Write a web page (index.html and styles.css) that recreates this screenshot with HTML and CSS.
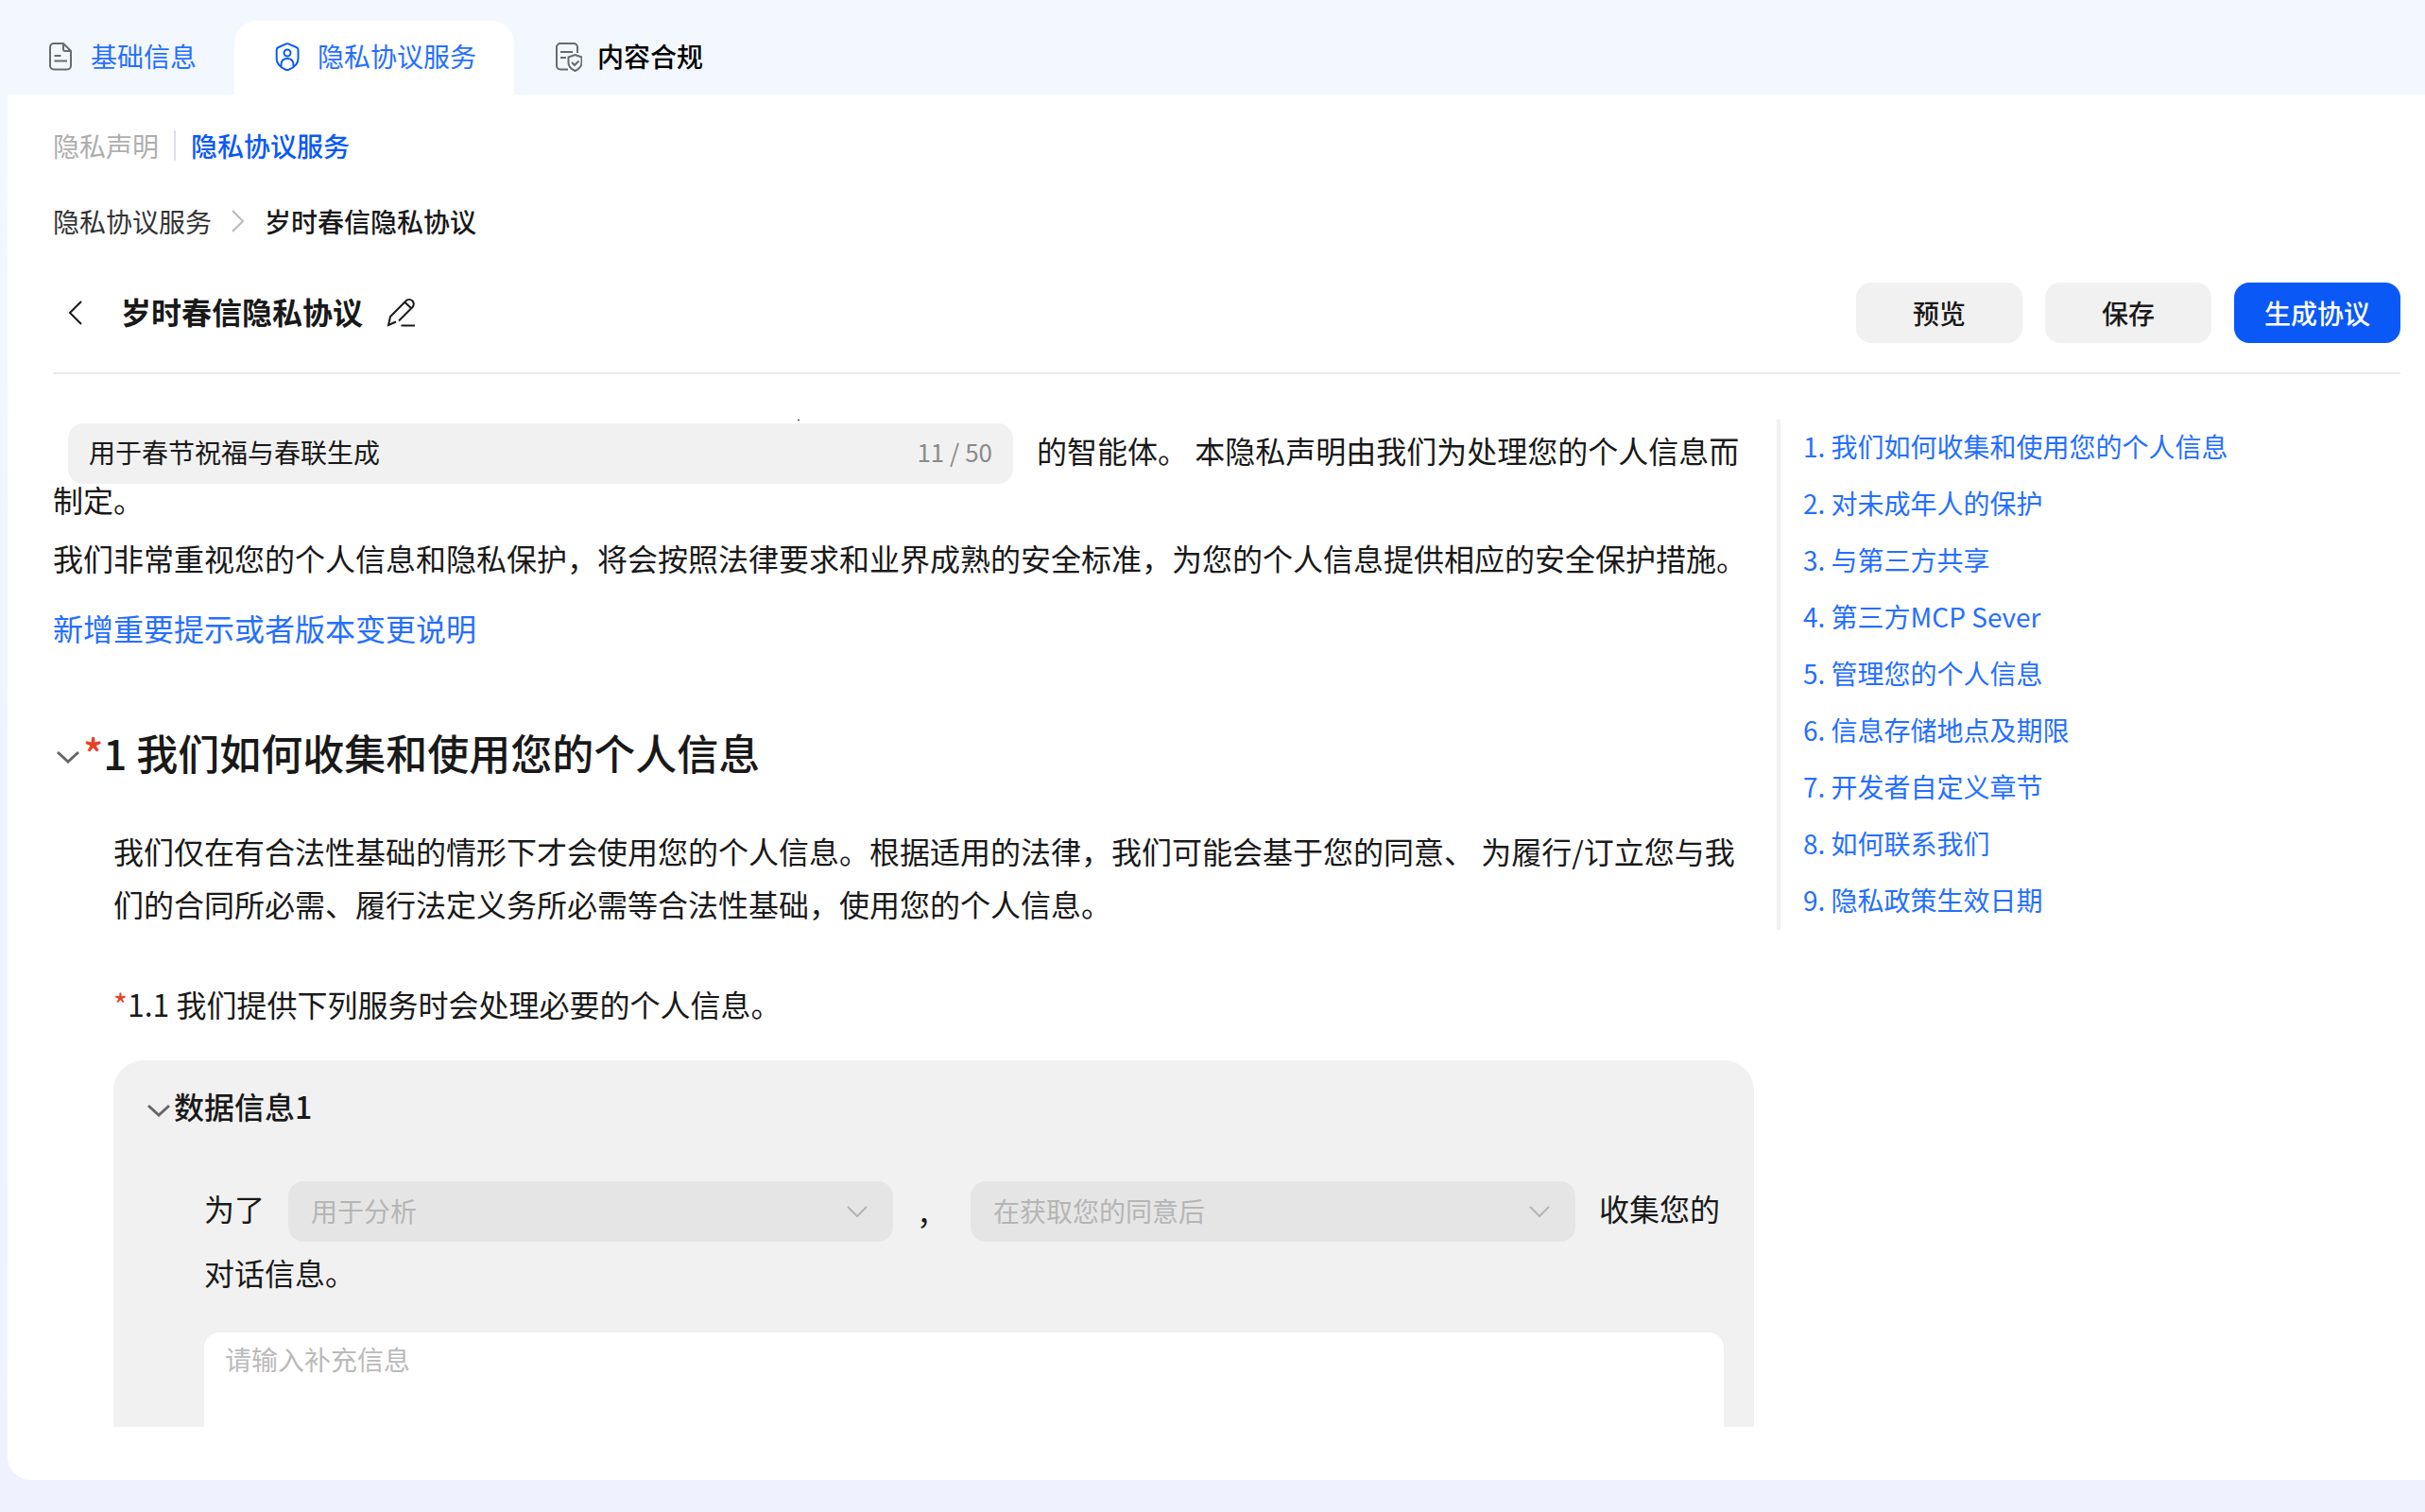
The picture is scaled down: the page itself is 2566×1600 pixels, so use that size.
FILE: index.html
```html
<!DOCTYPE html>
<html lang="zh-CN">
<head>
<meta charset="utf-8">
<meta name="viewport" content="width=device-width, initial-scale=1">
<title>隐私协议服务</title>
<link rel="stylesheet" href="styles.css">
</head>
<body>
<nav class="tabs">
  <a class="tab tab-info" href="#info">
    <svg class="icon" viewBox="0 0 32 32"><path d="M9 1h10l8 8v15.500a4 4 0 0 1-4 4H9a4 4 0 0 1-4-4V5a4 4 0 0 1 4-4zM19 1v6a2 2 0 0 0 2 2h6M9.500 14h7M9.500 19.500h13.500"/></svg>
    <span class="tab-label">基础信息</span>
  </a>
  <a class="tab tab-active" href="#privacy">
    <svg class="icon" viewBox="0 0 32 32"><path d="M15 1.400a3 3 0 0 1 2 0l8.500 3.600a3 3 0 0 1 2 2.700V17c0 6-4.500 9.500-10 11.700a4 4 0 0 1-3 0C9 26.500 4.700 23 4.700 17V7.700a3 3 0 0 1 2-2.700z"/><circle cx="16" cy="11" r="3.500"/><path d="M9.500 25v-1.500c0-4 2.500-6.500 6.500-6.500s6.500 2.500 6.500 6.500V25"/></svg>
    <span class="tab-label">隐私协议服务</span>
  </a>
  <a class="tab tab-check" href="#compliance">
    <svg class="icon" viewBox="0 0 32 32"><path d="M17 28.500H9a4 4 0 0 1-4-4V5a4 4 0 0 1 4-4h14a4 4 0 0 1 4 4v6M9 10h13M9 16h6M24.500 13l7 2.500v6c0 4-3 6.500-7 8.500-4-2-7-4.500-7-8.500v-6zM21 21l3 3 4.500-4.500"/></svg>
    <span class="tab-label">内容合规</span>
  </a>
</nav>
<main class="panel">
  <nav class="subnav">
    <a class="subnav-link" href="#statement">隐私声明</a>
    <a class="subnav-link subnav-current" href="#service">隐私协议服务</a>
  </nav>
  <nav class="crumbs">
    <a class="crumb" href="#service">隐私协议服务</a>
    <svg class="crumb-arrow" viewBox="0 0 16 24"><path d="M2 1l11 11L2 23"/></svg>
    <span class="crumb-current">岁时春信隐私协议</span>
  </nav>
  <header class="head">
    <button class="icon-button" type="button" aria-label="返回"><svg class="back" viewBox="0 0 32 32"><path d="M22 4L10 16l12 12"/></svg></button>
    <h1 class="title">岁时春信隐私协议</h1>
    <button class="icon-button" type="button" aria-label="编辑"><svg class="edit" viewBox="0 0 32 32"><path d="M11 25.500L3 29l2-9L21.500 3.500a4.500 4.500 0 0 1 7 6.500L14 24.500M20.500 5l7 6.500M16.500 29.500H31"/></svg></button>
    <div class="actions">
      <button class="button" type="button">预览</button>
      <button class="button" type="button">保存</button>
      <button class="button button-primary" type="button">生成协议</button>
    </div>
  </header>
  <div class="body">
    <article class="doc">
      <div class="purpose">
        <label class="field">
          <input class="field-input" type="text" value="用于春节祝福与春联生成" maxlength="50" aria-label="智能体用途">
          <span class="field-count">11 / 50</span>
        </label>
        <span class="phrase">的智能体。 本隐私声明由我们为处理您的个人信息而</span>
      </div>
      <p class="purpose-end">制定。</p>
      <p class="intro">我们非常重视您的个人信息和隐私保护，将会按照法律要求和业界成熟的安全标准，为您的个人信息提供相应的安全保护措施。</p>
      <a class="add-note" href="#note">新增重要提示或者版本变更说明</a>
      <h2 class="chapter">
        <svg class="fold" viewBox="0 0 24 24"><path d="M1 7l11 10L23 7"/></svg>
        <span><span class="required">*</span>1 我们如何收集和使用您的个人信息</span>
      </h2>
      <section class="section">
        <p class="text">我们仅在有合法性基础的情形下才会使用您的个人信息。根据适用的法律，我们可能会基于您的同意、 为履行/订立您与我们的合同所必需、履行法定义务所必需等合法性基础，使用您的个人信息。</p>
        <p class="item"><span class="required">*</span>1.1 我们提供下列服务时会处理必要的个人信息。</p>
        <div class="card">
          <h3 class="card-title">
            <svg class="fold" viewBox="0 0 24 24"><path d="M1 7l11 10L23 7"/></svg>
            数据信息1
          </h3>
          <div class="card-body">
            <div class="sentence">
              <span class="phrase">为了</span>
              <span class="select-box">
                <select class="select" aria-label="收集目的" disabled><option>用于分析</option></select>
                <svg class="select-arrow" viewBox="0 0 24 24"><path d="M2 7l10 10L22 7"/></svg>
              </span>
              <span>，</span>
              <span class="select-box">
                <select class="select" aria-label="收集时机" disabled><option>在获取您的同意后</option></select>
                <svg class="select-arrow" viewBox="0 0 24 24"><path d="M2 7l10 10L22 7"/></svg>
              </span>
              <span class="phrase">收集您的</span>
            </div>
            <p class="sentence-end">对话信息。</p>
            <textarea class="extra" rows="5" placeholder="请输入补充信息" aria-label="补充信息"></textarea>
          </div>
        </div>
      </section>
    </article>
    <nav class="toc">
      <a class="toc-link" href="#c1">1. 我们如何收集和使用您的个人信息</a>
      <a class="toc-link" href="#c2">2. 对未成年人的保护</a>
      <a class="toc-link" href="#c3">3. 与第三方共享</a>
      <a class="toc-link" href="#c4">4. 第三方MCP Sever</a>
      <a class="toc-link" href="#c5">5. 管理您的个人信息</a>
      <a class="toc-link" href="#c6">6. 信息存储地点及期限</a>
      <a class="toc-link" href="#c7">7. 开发者自定义章节</a>
      <a class="toc-link" href="#c8">8. 如何联系我们</a>
      <a class="toc-link" href="#c9">9. 隐私政策生效日期</a>
    </nav>
  </div>
</main>
</body>
</html>
```
FILE: styles.css
```css
* {
  box-sizing: border-box;
}

body {
  margin: 0;
  height: 100vh;
  display: flex;
  flex-direction: column;
  overflow: hidden;
  background: linear-gradient(#f3f8fe, #f0f5ff 30%, #eff1ff);
  color: #191919;
  font-family: "Noto Sans CJK SC", sans-serif;
  font-size: 32px;
  line-height: 56px;
}

h1, h2, h3, p {
  margin: 0;
}

a {
  text-decoration: none;
}

svg {
  flex: none;
  fill: none;
  stroke: currentColor;
  stroke-width: 2;
}

button, input, select, textarea {
  margin: 0;
  border: 0;
  font: inherit;
  color: inherit;
}

/* Top tabs */
.tabs {
  display: flex;
  flex: none;
  padding: 22px 0 0 8px;
}

.tab {
  display: flex;
  align-items: center;
  gap: 16px;
  height: 78px;
  padding: 0 40px;
  font-size: 28px;
  color: #256fff;
}

.tab-label {
  padding-bottom: 4px;
}

.tab .icon {
  width: 32px;
  height: 32px;
}

.tab-info .icon,
.tab-check .icon {
  color: #666b73;
}

.tab-active {
  border-radius: 24px 24px 0 0;
  background: #fff;
}

.tab-active .icon {
  color: #0a59f7;
}

.tab-check {
  color: #000;
  font-weight: 500;
}

/* Page panel */
.panel {
  display: flex;
  flex: 1;
  flex-direction: column;
  min-height: 0;
  margin: 0 0 34px 8px;
  padding: 34px 26px 56px 48px;
  border-radius: 0 0 0 24px;
  background: #fff;
}

.subnav,
.crumbs {
  display: flex;
  align-items: center;
  flex: none;
  height: 40px;
  font-size: 28px;
}

.subnav-link {
  line-height: 32px;
  color: #aeaeae;
}

.subnav-current {
  margin-left: 16px;
  padding-left: 16px;
  border-left: 2px solid #dcdfe6;
  color: #0a59f7;
  font-weight: 500;
}

.crumbs {
  gap: 20px;
  margin-top: 40px;
}

.crumb {
  color: #333;
}

.crumb-arrow {
  width: 16px;
  height: 24px;
  color: #bbb;
}

.crumb-current {
  font-weight: 500;
}

.head {
  display: flex;
  align-items: center;
  flex: none;
  gap: 24px;
  height: 128px;
  margin-top: 14px;
  padding-left: 8px;
  border-bottom: 2px solid #ebebeb;
}

.icon-button {
  display: flex;
  padding: 0;
  background: none;
}

.back,
.edit {
  width: 32px;
  height: 32px;
}

.title {
  padding: 0 0 4px 8px;
  font-size: 32px;
  font-weight: 700;
}

.actions {
  display: flex;
  gap: 24px;
  margin-left: auto;
}

.button {
  width: 176px;
  height: 64px;
  padding: 0;
  border-radius: 16px;
  background: #f1f1f1;
  font-size: 28px;
  font-weight: 500;
}

.button-primary {
  background: #0a59f7;
  color: #fff;
}

/* Agreement text and contents list */
.body {
  display: flex;
  align-items: flex-start;
  flex: 1;
  gap: 24px;
  min-height: 0;
  margin-top: 48px;
}

.doc {
  position: relative;
  flex: 1;
  height: 100%;
  overflow: hidden;
}

/* Tail of the line that is scrolled out above */
.doc::before {
  content: "";
  position: absolute;
  top: 0;
  left: 788px;
  width: 2px;
  height: 1px;
  background: #191919;
}

.purpose {
  display: flex;
  align-items: center;
  gap: 25px;
  padding: 4px 0 0 16px;
}

.field {
  display: flex;
  align-items: center;
  width: 1000px;
  height: 64px;
  padding: 0 22px 4px;
  border-radius: 16px;
  background: #f1f1f1;
  font-size: 28px;
}

.field-input {
  flex: 1;
  min-width: 0;
  padding: 0;
  background: none;
}

.field-count {
  font-size: 26px;
  color: #8a8a8a;
}

.phrase {
  padding-bottom: 8px;
  white-space: nowrap;
}

.purpose-end {
  line-height: 32px;
}

.intro {
  margin-top: 18px;
}

.add-note {
  display: block;
  width: fit-content;
  margin-top: 18px;
  color: #256fff;
}

.chapter {
  display: flex;
  align-items: center;
  gap: 4px;
  margin-top: 72px;
  padding-left: 4px;
  font-size: 44px;
  font-weight: 500;
  line-height: 64px;
}

.fold {
  width: 24px;
  height: 24px;
  margin-top: 10px;
  color: #666;
  stroke-width: 3;
}

.required {
  color: #e84026;
}

.section {
  padding-left: 64px;
}

.text {
  margin-top: 44px;
}

.item {
  margin-top: 50px;
}

.card {
  margin-top: 32px;
  padding: 20px 32px 0;
  border-radius: 32px 32px 0 0;
  background: #f1f1f1;
}

.card-title {
  display: flex;
  align-items: center;
  gap: 4px;
  padding-left: 4px;
  font-size: 32px;
  font-weight: 500;
}

.card-body {
  padding-left: 64px;
}

.sentence {
  display: flex;
  align-items: center;
  gap: 25px;
  margin-top: 52px;
}

.select-box {
  display: flex;
  position: relative;
  width: 640px;
}

.select {
  appearance: none;
  width: 100%;
  height: 64px;
  padding: 0 24px 2px;
  border-radius: 16px;
  background: #e5e5e5;
  color: #b5b5b5;
  font-size: 28px;
  opacity: 1;
}

.select-arrow {
  position: absolute;
  top: 20px;
  right: 26px;
  width: 24px;
  height: 24px;
  color: #b5b5b5;
}

.sentence-end {
  margin-top: 4px;
}

.extra {
  display: block;
  width: 100%;
  margin-top: 36px;
  padding: 6px 22px;
  border-radius: 16px;
  background: #fff;
  font-size: 28px;
  line-height: 44px;
  resize: none;
}

.extra::placeholder {
  color: #bababa;
}

.toc {
  display: flex;
  flex-direction: column;
  width: 660px;
  padding-left: 24px;
  border-left: 4px solid #f1f1f1;
  font-size: 28px;
}

.toc-link {
  padding-bottom: 4px;
  color: #256fff;
}
```
